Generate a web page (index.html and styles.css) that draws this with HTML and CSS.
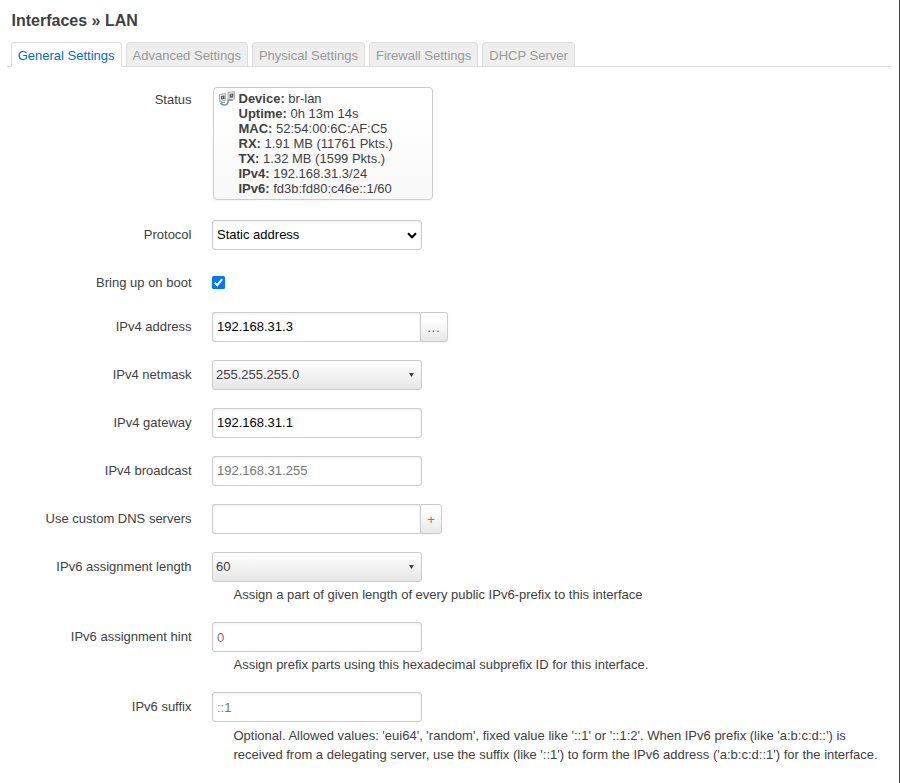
FILE: index.html
```
<!DOCTYPE html>
<html lang="en">
<head>
<meta charset="utf-8">
<title>Interfaces » LAN</title>
<link rel="stylesheet" href="styles.css">
</head>
<body>
<main class="panel">
  <h1>Interfaces » LAN</h1>
  <nav class="tabs">
    <a class="tab active">General Settings</a>
    <a class="tab">Advanced Settings</a>
    <a class="tab">Physical Settings</a>
    <a class="tab">Firewall Settings</a>
    <a class="tab">DHCP Server</a>
  </nav>
  <form class="form">
    <div class="row status-row">
      <label>Status</label>
      <div class="status">
        <svg class="icon" width="16" height="16" viewBox="0 0 16 16" fill="none">
          <path d="M.5 3.500 6.500 2.500v7l-6 1z" fill="#e8e8e3" stroke="#aaa"/>
          <path d="M2 5 5.500 4.400v3.600L2 8.600z" fill="#555"/>
          <path d="M3 5.500h1v2H3z" fill="#b5b5b5"/>
          <path d="m9 1.500 6.500-1v7.500l-6.500 1z" fill="#e8e8e3" stroke="#aaa"/>
          <path d="m10.700 3 3.600-.5v3.800l-3.600.6z" fill="#555"/>
          <path d="M12 3.500h1v2h-1z" fill="#b5b5b5"/>
          <path d="M1.500 12c2 2.600 6.500 2.600 7.200.3.600-1.800-.2-2.800 1.300-3.300h2" stroke="#6f96c8" stroke-width="1.6"/>
          <path d="M2 11.500h4M11 9.500h3" stroke="#999"/>
        </svg>
        <div class="details">
          <div><b>Device:</b> br-lan</div>
          <div><b>Uptime:</b> 0h 13m 14s</div>
          <div><b>MAC:</b> 52:54:00:6C:AF:C5</div>
          <div><b>RX:</b> 1.91 MB (11761 Pkts.)</div>
          <div><b>TX:</b> 1.32 MB (1599 Pkts.)</div>
          <div><b>IPv4:</b> 192.168.31.3/24</div>
          <div><b>IPv6:</b> fd3b:fd80:c46e::1/60</div>
        </div>
      </div>
    </div>
    <div class="row">
      <label>Protocol</label>
      <div class="control select">Static address
        <svg class="chevron" width="10" height="7" viewBox="0 0 10 7"><path d="m1 1.300 4 4 4-4" fill="none" stroke="#000" stroke-width="2"/></svg>
      </div>
    </div>
    <div class="row">
      <label>Bring up on boot</label>
      <div class="check"><svg width="13" height="13" viewBox="0 0 13 13"><rect width="13" height="13" rx="1.500" fill="#0075ff"/><path d="m2.700 6.700 2.500 2.500 5-6" fill="none" stroke="#fff" stroke-width="2"/></svg></div>
    </div>
    <div class="row address-row">
      <label>IPv4 address</label>
      <div class="group"><input class="control" value="192.168.31.3"><span class="addon dots">...</span></div>
    </div>
    <div class="row">
      <label>IPv4 netmask</label>
      <div class="control dropdown">255.255.255.0<svg class="caret" width="5" height="4" viewBox="0 0 5 4"><path d="M0 0h5L2.500 4z" fill="#404040"/></svg></div>
    </div>
    <div class="row">
      <label>IPv4 gateway</label>
      <input class="control" value="192.168.31.1">
    </div>
    <div class="row">
      <label>IPv4 broadcast</label>
      <input class="control" placeholder="192.168.31.255">
    </div>
    <div class="row">
      <label>Use custom DNS servers</label>
      <div class="group"><input class="control"><span class="addon plus">+</span></div>
    </div>
    <div class="row">
      <label>IPv6 assignment length</label>
      <div class="field">
        <div class="control dropdown">60<svg class="caret" width="5" height="4" viewBox="0 0 5 4"><path d="M0 0h5L2.500 4z" fill="#404040"/></svg></div>
        <p>Assign a part of given length of every public IPv6-prefix to this interface</p>
      </div>
    </div>
    <div class="row">
      <label>IPv6 assignment hint</label>
      <div class="field">
        <input class="control low" placeholder="0">
        <p>Assign prefix parts using this hexadecimal subprefix ID for this interface.</p>
      </div>
    </div>
    <div class="row">
      <label>IPv6 suffix</label>
      <div class="field">
        <input class="control low" placeholder="::1">
        <p class="long">Optional. Allowed values: 'eui64', 'random', fixed value like '::1' or '::1:2'. When IPv6 prefix (like 'a:b:c:d::') is<br>received from a delegating server, use the suffix (like '::1') to form the IPv6 address ('a:b:c:d::1') for the interface.</p>
      </div>
    </div>
  </form>
</main>
</body>
</html>
```
FILE: styles.css
```
* { box-sizing: border-box; }
body {
  margin: 0;
  background: #fff;
  color: #404040;
  font: 13px/18px "Liberation Sans", Arial, sans-serif;
}
.panel {
  height: 783px;
  overflow: hidden;
  padding: 12px 8px 0 7px;
  border-right: 1px solid #404040;
}
h1 { margin: 0 0 12px 4.5px; font-size: 16px; line-height: 18px; }
.tabs {
  display: flex;
  gap: 4px;
  height: 25px;
  padding-left: 3.700px;
  border-bottom: 1px solid #ddd;
}
.tab {
  height: 25px;
  padding: 0 6px;
  border: 1px solid #ddd;
  border-radius: 4px 4px 0 0;
  background: #eee;
  color: #999;
  line-height: 25px;
  white-space: nowrap;
}
.tab.active { background: #fff; color: #0069d6; border-bottom-color: #fff; }
.form { display: flex; flex-direction: column; gap: 18px; padding-top: 20px; }
.row { display: flex; align-items: flex-start; gap: 20.5px; min-height: 30px; }
label { width: 184.5px; padding-top: 6px; text-align: right; flex: none; }
.status-row { height: 115px; }
.status-row label { padding-top: 4px; }
.status {
  display: flex;
  gap: 3.500px;
  width: 220px;
  height: 113px;
  margin-left: 1px;
  padding: 3px 5px;
  border: 1px solid #ccc;
  border-radius: 4px;
  background: linear-gradient(#fff, #fff 25%, #f8f8f8);
  box-shadow: 0 1px 2px rgba(0,0,0,.05);
  line-height: 15px;
}
.icon { flex: none; }
.control {
  display: block;
  width: 210px;
  height: 30px;
  margin: 0;
  padding: 3px 4px 5px;
  border: 1px solid #ccc;
  border-radius: 3px;
  background: #fff;
  box-shadow: inset 0 1px 3px rgba(0,0,0,.07);
  color: #000;
  font: 13px/18px "Liberation Sans", Arial, sans-serif;
}
.low { padding: 4px; }
input::placeholder { color: #757575; opacity: 1; }
.select, .dropdown {
  display: flex;
  align-items: center;
  justify-content: space-between;
}
.select { padding: 4px; }
.dropdown {
  padding: 4px 7px 4px 3px;
  background: linear-gradient(#fff, #e6e6e6);
  box-shadow: none;
  color: #404040;
}
.check { height: 26px; padding-top: 8px; }
.check svg { display: block; }
.address-row { margin-top: -4px; }
.group { display: flex; }
.group .control { width: 208px; border-right: 0; border-radius: 3px 0 0 3px; }
.addon {
  height: 30px;
  border: 1px solid #ccc;
  border-radius: 0 3px 3px 0;
  background: linear-gradient(#fff, #fff 25%, #e6e6e6);
  box-shadow: 0 1px 2px rgba(0,0,0,.05);
  line-height: 29px;
  text-align: center;
}
.dots { width: 28px; font-size: 12px; line-height: 31px; letter-spacing: 1px; }
.plus { width: 22px; color: #46a546; }
p { margin: 4px 0 0 21.5px; white-space: nowrap; }
.long { line-height: 19px; }
```
